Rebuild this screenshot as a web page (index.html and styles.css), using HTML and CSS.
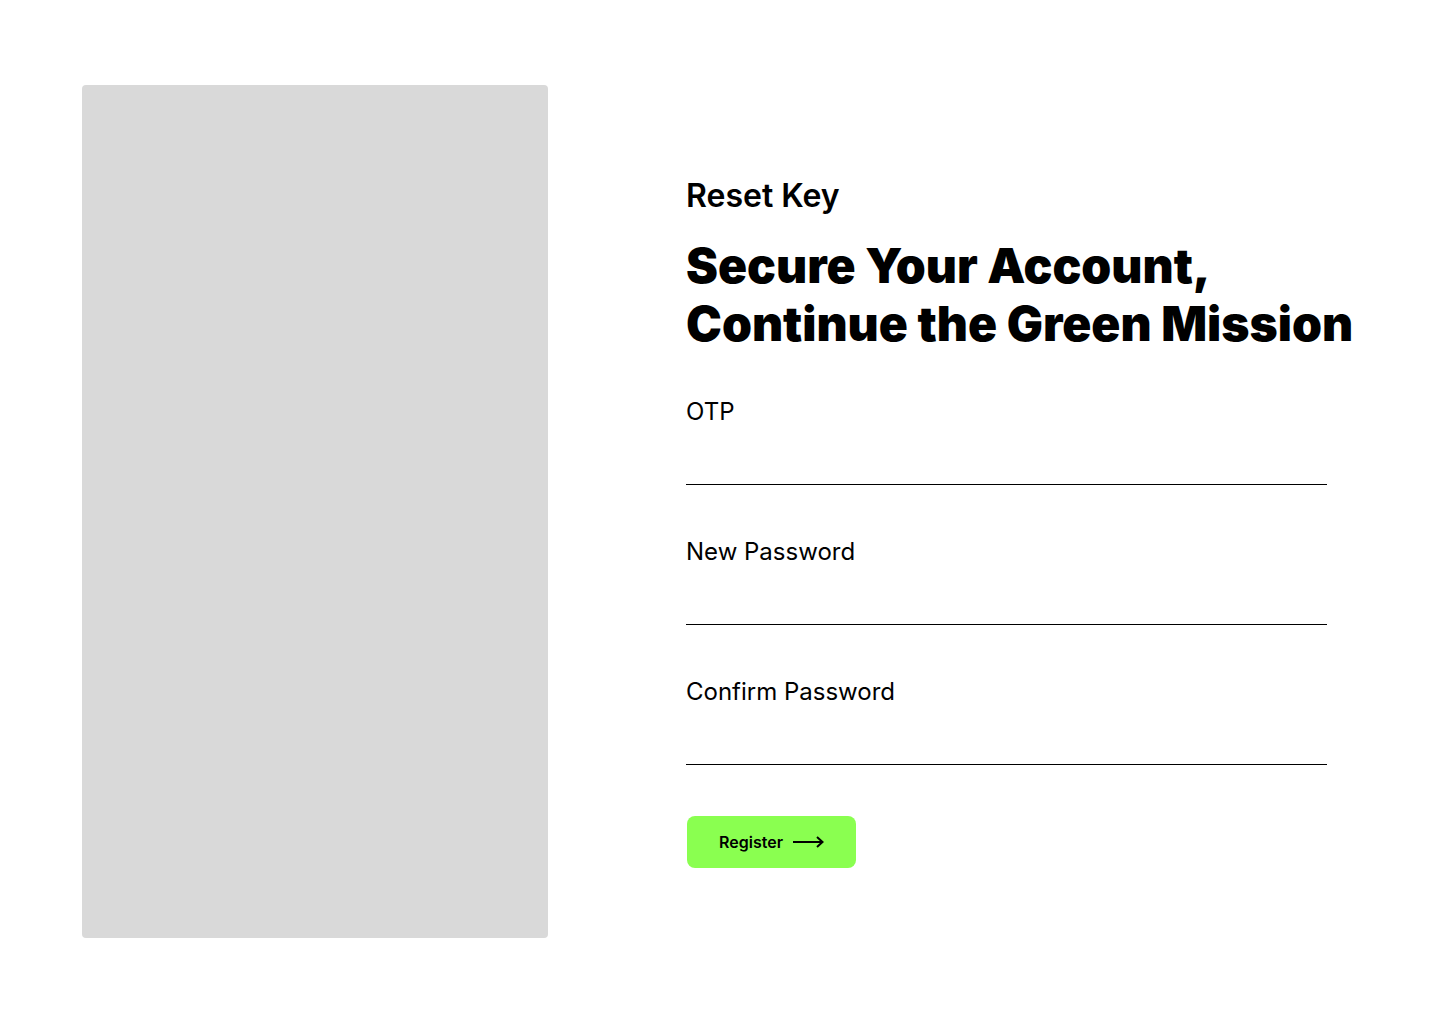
FILE: index.html
```html
<!DOCTYPE html>
<html lang="en">
<head>
<meta charset="utf-8">
<title>Reset Key</title>
<link rel="stylesheet" href="styles.css">
</head>
<body>
<main class="page">
  <div class="visual"></div>
  <section class="form-area">
    <p class="eyebrow">Reset Key</p>
    <h1 class="title">Secure Your Account,<br>Continue the Green Mission</h1>
    <form class="form">
      <label class="field field-first">
        <span class="label">OTP</span>
        <input class="input" type="text">
      </label>
      <label class="field">
        <span class="label">New Password</span>
        <input class="input" type="password">
      </label>
      <label class="field">
        <span class="label">Confirm Password</span>
        <input class="input" type="password">
      </label>
      <button class="btn" type="button">
        <span>Register</span>
        <svg class="arrow" width="31" height="12" viewBox="0 0 31 12" fill="none">
          <path d="M0 6H29M24 1L29.5 6L24 11" stroke="#000" stroke-width="2"/>
        </svg>
      </button>
    </form>
  </section>
</main>
</body>
</html>
```
FILE: styles.css
```css
* { box-sizing: border-box; }
html, body { margin: 0; padding: 0; background: #fff; }
body { font-family: Inter, "Noto Sans", sans-serif; color: #000; }
.page {
  display: flex;
  padding: 85px 0 0 82px;
  height: 1024px;
}
.visual {
  width: 466px;
  height: 853px;
  background: #d9d9d9;
  border-radius: 4px;
  flex: none;
}
.form-area {
  margin-left: 138px;
  padding-top: 93px;
  width: 641px;
}
.eyebrow {
  margin: 0;
  font-size: 32px;
  font-weight: 600;
  line-height: 36px;
}
.title {
  margin: 23px 0 0;
  font-size: 48px;
  font-weight: 900;
  line-height: 58px;
  letter-spacing: 0;
  white-space: nowrap;
}
.form { margin-top: 44px; display: flex; flex-direction: column; }
.field {
  display: flex;
  flex-direction: column;
  margin-top: 52px;
}
.field-first { margin-top: 0; }
.label {
  font-size: 24px;
  line-height: 30px;
  font-weight: 400;
}
.input {
  border: none;
  border-bottom: 1px solid #000;
  height: 58px;
  font: inherit;
  font-size: 20px;
  outline: none;
  padding: 0;
  background: transparent;
}
.btn {
  align-self: flex-start;
  margin-top: 51px;
  margin-left: 1px;
  width: 169px;
  height: 52px;
  border: none;
  border-radius: 8px;
  background: #8aff50;
  font-family: Inter, sans-serif;
  font-size: 16px;
  font-weight: 600;
  color: #000;
  display: flex;
  align-items: center;
  justify-content: center;
  gap: 10px;
  padding: 0;
}
.arrow { display: block; }
```
